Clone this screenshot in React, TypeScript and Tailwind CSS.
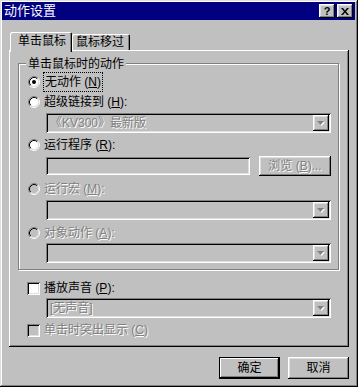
import type { ReactNode } from 'react'

const raised = 'shadow-[inset_-1px_-1px_#000,inset_1px_1px_#fff,inset_-2px_-2px_#808080,inset_2px_2px_#dfdfdf]'
const sunken = 'shadow-[inset_1px_1px_#808080,inset_-1px_-1px_#fff,inset_2px_2px_#000,inset_-2px_-2px_#dfdfdf]'
const dim = 'text-[#808080] [text-shadow:1px_1px_0_#fff]'

function Radio({ checked = false, disabled = false }: { checked?: boolean; disabled?: boolean }) {
  return (
    <svg width="12" height="12" viewBox="0 0 12 12" className="shrink-0">
      <circle cx="6" cy="6" r="4.5" fill={disabled ? '#c0c0c0' : '#fff'} />
      <path d="M2.11 9.89 A5.5 5.5 0 0 1 9.89 2.11" fill="none" stroke="#808080" strokeWidth="1" />
      <path d="M9.89 2.11 A5.5 5.5 0 0 1 2.11 9.89" fill="none" stroke="#fff" strokeWidth="1" />
      <path d="M2.82 9.18 A4.5 4.5 0 0 1 9.18 2.82" fill="none" stroke="#000" strokeWidth="1" />
      <path d="M9.18 2.82 A4.5 4.5 0 0 1 2.82 9.18" fill="none" stroke="#dfdfdf" strokeWidth="1" />
      {checked && <circle cx="6" cy="6" r="2" fill="#000" />}
    </svg>
  )
}

function Check({ disabled = false }: { disabled?: boolean }) {
  return <div className={`w-[13px] h-[13px] shrink-0 ${sunken} ${disabled ? 'bg-[#c0c0c0]' : 'bg-white'}`} />
}

function Arrow() {
  return (
    <div className={`w-[16px] h-[16px] bg-[#c0c0c0] ${raised} flex items-center justify-center`}>
      <svg width="8" height="5" viewBox="0 0 8 5">
        <path d="M1 1h7l-3.5 4z" fill="#fff" />
        <path d="M0 0h7l-3.5 4z" fill="#808080" />
      </svg>
    </div>
  )
}

function Combo({ text, width = 'w-[285px]' }: { text?: string; width?: string }) {
  return (
    <div className={`${width} h-[20px] ${sunken} bg-[#c0c0c0] flex items-center justify-between pl-[4px] pr-[2px]`}>
      <span className={`${dim} leading-[16px]`}>{text}</span>
      <Arrow />
    </div>
  )
}

function Label({ children, k, colon = false, disabled = false }: { children: ReactNode; k: string; colon?: boolean; disabled?: boolean }) {
  return (
    <span className={`leading-[16px] whitespace-pre ${disabled ? dim : 'text-black'}`}>
      {children} (<span className="underline">{k}</span>){colon ? ':' : ''}
    </span>
  )
}

export default function App() {
  return (
    <div className="w-[358px] h-[387px] bg-[#c0c0c0] font-['Liberation_Sans','Noto_Sans_CJK_SC',sans-serif] text-[12px] text-black select-none">
      <div className="w-[358px] h-[387px] pt-[2px] pl-[2px] pr-[3px] shadow-[inset_-1px_-1px_#000,inset_1px_1px_#dfdfdf,inset_-2px_-2px_#808080,inset_2px_2px_#fff] flex flex-col">
        {/* Title bar */}
        <div className="h-[18px] bg-[#000080] flex items-center justify-between pl-[2px] pr-[2px]">
          <span className="text-white text-[13px] leading-[18px]">动作设置</span>
          <div className="flex gap-[2px]">
            <div className={`w-[16px] h-[14px] bg-[#c0c0c0] ${raised} flex items-center justify-center text-[11px] font-bold leading-none`}>?</div>
            <div className={`w-[16px] h-[14px] bg-[#c0c0c0] ${raised} flex items-center justify-center`}>
              <svg width="8" height="7" viewBox="0 0 8 7">
                <path d="M0 0h2l2 2.5L6 0h2L5 3.5 8 7H6L4 4.5 2 7H0l3-3.5z" fill="#000" />
              </svg>
            </div>
          </div>
        </div>

        {/* Tabs */}
        <div className="mt-[12px] ml-[7px] flex items-end">
          <div className="relative z-10 ml-[1px] -mb-[2px] w-[62px] h-[20px] bg-[#c0c0c0] rounded-t-[2px] shadow-[inset_1px_1px_#fff,inset_-1px_0_#000,inset_-2px_0_#808080] pl-[8px] pt-[1px] leading-[16px]">
            单击鼠标
          </div>
          <div className="w-[58px] h-[16px] bg-[#c0c0c0] rounded-t-[2px] shadow-[inset_1px_1px_#fff,inset_-1px_0_#000,inset_-2px_0_#808080] pl-[4px] leading-[16px]">
            鼠标移过
          </div>
        </div>

        {/* Panel */}
        <div className="ml-[7px] w-[340px] h-[297px] shadow-[inset_-1px_-1px_#000,inset_1px_1px_#fff,inset_-2px_-2px_#808080] flex flex-col">
          <div className="relative ml-[9px] mt-[13px] w-[321px] h-[207px] border border-[#808080] shadow-[1px_1px_0_#fff,inset_1px_1px_0_#fff] flex flex-col pl-[9px]">
            <span className="absolute left-[7px] -top-[8px] bg-[#c0c0c0] px-[2px] leading-[16px]">单击鼠标时的动作</span>

            <div className="mt-[10px] h-[16px] flex items-center gap-[4px]">
              <Radio checked />
              <span className="outline outline-1 outline-dotted outline-black px-[1px]">
                <Label k="N">无动作</Label>
              </span>
            </div>
            <div className="mt-[4px] h-[16px] flex items-center gap-[4px]">
              <Radio />
              <Label k="H" colon>超级链接到</Label>
            </div>
            <div className="mt-[3px] ml-[18px]">
              <Combo text="《KV300》最新版" />
            </div>

            <div className="mt-[4px] h-[16px] flex items-center gap-[4px]">
              <Radio />
              <Label k="R" colon>运行程序</Label>
            </div>
            <div className="mt-[3px] ml-[18px] h-[20px] flex items-center gap-[9px]">
              <div className={`w-[204px] h-[18px] ${sunken} bg-[#c0c0c0]`} />
              <div className={`w-[72px] h-[20px] ${raised} bg-[#c0c0c0] flex items-center justify-center`}>
                <span className={`${dim} leading-[16px] whitespace-pre`}>
                  浏览 (<span className="underline">B</span>)...
                </span>
              </div>
            </div>

            <div className="mt-[5px] h-[16px] flex items-center gap-[4px]">
              <Radio disabled />
              <Label k="M" colon disabled>运行宏</Label>
            </div>
            <div className="mt-[3px] ml-[18px]">
              <Combo />
            </div>

            <div className="mt-[5px] h-[16px] flex items-center gap-[4px]">
              <Radio disabled />
              <Label k="A" colon disabled>对象动作</Label>
            </div>
            <div className="mt-[2px] ml-[18px]">
              <Combo />
            </div>
          </div>

          <div className="mt-[10px] ml-[18px] h-[16px] flex items-center gap-[4px]">
            <Check />
            <Label k="P" colon>播放声音</Label>
          </div>
          <div className="mt-[2px] ml-[37px]">
            <Combo text="[无声音]" />
          </div>
          <div className="mt-[4px] ml-[18px] h-[16px] flex items-center gap-[4px]">
            <Check disabled />
            <Label k="C" disabled>单击时突出显示</Label>
          </div>
        </div>

        {/* Buttons */}
        <div className="mt-[10px] flex justify-end gap-[8px] pr-[6px]">
          <div className="w-[61px] h-[22px] border border-black bg-[#c0c0c0] shadow-[inset_-1px_-1px_#000,inset_1px_1px_#fff,inset_-2px_-2px_#808080] flex items-center justify-center leading-[16px]">
            确定
          </div>
          <div className={`w-[61px] h-[22px] bg-[#c0c0c0] ${raised} flex items-center justify-center leading-[16px]`}>
            取消
          </div>
        </div>
      </div>
    </div>
  )
}
